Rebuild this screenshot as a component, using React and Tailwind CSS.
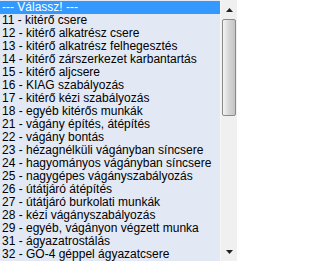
const options = [
  '--- Válassz! ---',
  '11 - kitérő csere',
  '12 - kitérő alkatrész csere',
  '13 - kitérő alkatrész felhegesztés',
  '14 - kitérő zárszerkezet karbantartás',
  '15 - kitérő aljcsere',
  '16 - KIAG szabályozás',
  '17 - kitérő kézi szabályozás',
  '18 - egyéb kitérős munkák',
  '21 - vágány építés, átépítés',
  '22 - vágány bontás',
  '23 - hézagnélküli vágányban síncsere',
  '24 - hagyományos vágányban síncsere',
  '25 - nagygépes vágányszabályozás',
  '26 - útátjáró átépítés',
  '27 - útátjáró burkolati munkák',
  '28 - kézi vágányszabályozás',
  '29 - egyéb, vágányon végzett munka',
  '31 - ágyazatrostálás',
  '32 - GO-4 géppel ágyazatcsere',
];

export default function App() {
  return (
    <div className="flex w-[237px] h-[261px] bg-[#e2e9f5] overflow-hidden font-['Liberation_Sans',Arial,sans-serif] text-[12px] leading-[13px] text-black">
      {/* list */}
      <div className="flex-1 flex flex-col pt-px">
        {options.map((o, i) => (
          <div
            key={o}
            className={`h-[13px] pl-[2px] whitespace-nowrap ${i === 0 ? 'bg-[#3399ff] text-white' : ''}`}
          >
            {o}
          </div>
        ))}
      </div>

      {/* scrollbar */}
      <div className="w-[17px] flex flex-col bg-[#f0f0f0] border-l border-[#f7f7f7]">
        <div className="h-[19px] flex items-center justify-center">
          <svg width="7" height="4" viewBox="0 0 7 4">
            <path d="M3.5 0L7 4H0Z" fill="#222" />
          </svg>
        </div>
        <div className="h-[97px] mx-px rounded-[2px] border border-[#8a8a8a] bg-gradient-to-r from-[#f4f4f4] via-[#d6d6d6] to-[#c4c4c4]" />
        <div className="flex-1" />
        <div className="h-[19px] flex items-center justify-center">
          <svg width="7" height="4" viewBox="0 0 7 4">
            <path d="M0 0H7L3.5 4Z" fill="#222" />
          </svg>
        </div>
      </div>
    </div>
  );
}
